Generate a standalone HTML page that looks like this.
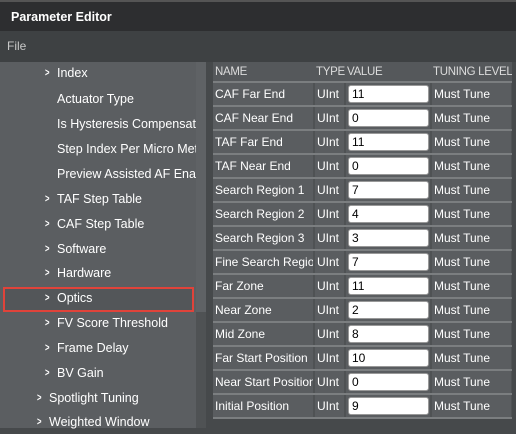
<!DOCTYPE html>
<html><head><style>
body{margin:0;width:516px;height:428px;overflow:hidden;background:#46494b;font-family:"Liberation Sans",sans-serif;font-size:12.5px;color:#fff;position:relative}
.title{position:absolute;left:0;top:0;width:516px;height:31px;background:#2d2e30;border-top:2px solid #555;box-sizing:border-box;font-weight:bold;font-size:12.5px;line-height:30px;padding-left:11px}
.menu{position:absolute;left:0;top:31px;width:516px;height:31px;background:#3e4143;color:#c8c8c8;line-height:30px;padding-left:7px;box-sizing:border-box;font-size:12px}
.left{position:absolute;left:0;top:62px;width:196px;height:366px;background:#5b5e61;overflow:hidden}
.sb{position:absolute;left:196px;top:62px;width:10px;height:366px;background:#4f5254}
.thumb{position:absolute;left:196px;top:62px;width:10px;height:250px;background:#5f6265}
.item{position:absolute;white-space:nowrap;height:24px;line-height:24px}
.ch{position:absolute;font-size:11px;font-weight:bold;transform:scaleX(.7)}
.hl{position:absolute;left:3px;top:287px;width:187px;height:21px;border:2px solid #e0433a;background:#535659}
table{position:absolute;left:213px;top:62px;border-collapse:collapse;width:299px;table-layout:fixed;font-size:12px}
td{height:24px;padding:0 2px;border-bottom:2px solid #7b7e80;border-right:2px solid #4f5254;background:#5a5d60;white-space:nowrap;overflow:hidden;box-sizing:border-box}
th{height:20px;box-sizing:border-box;text-align:left;font-weight:normal;font-size:11.5px;letter-spacing:-0.3px;color:#dcdcdc;padding:0 2px;background:#55585b;border-bottom:2px solid #7b7e80;white-space:nowrap;overflow:hidden}
.in{background:#fff;color:#000;border-radius:3px;height:16px;line-height:16px;padding-left:3px;width:76px;border:1px solid #999}
.rt{position:absolute;left:512px;top:62px;width:4px;height:366px;background:#46494b}
</style></head><body>
<div class="title">Parameter Editor</div>
<div class="menu">File</div>
<div class="left"></div>
<div class="sb"></div><div class="thumb"></div>
<div class="hl"></div>
<div style="position:absolute;left:0;top:0">
<div class="item" style="top:61px;left:57px"><span class="ch" style="left:-13px">&gt;</span>Index</div>
<div class="item" style="top:87px;left:57px">Actuator Type</div>
<div class="item" style="top:112px;left:57px;width:139px;overflow:hidden">Is Hysteresis Compensation</div>
<div class="item" style="top:137px;left:57px;width:139px;overflow:hidden">Step Index Per Micro Meter</div>
<div class="item" style="top:162px;left:57px;width:139px;overflow:hidden">Preview Assisted AF Enable</div>
<div class="item" style="top:187px;left:57px"><span class="ch" style="left:-13px">&gt;</span>TAF Step Table</div>
<div class="item" style="top:212px;left:57px"><span class="ch" style="left:-13px">&gt;</span>CAF Step Table</div>
<div class="item" style="top:237px;left:57px"><span class="ch" style="left:-13px">&gt;</span>Software</div>
<div class="item" style="top:261px;left:57px"><span class="ch" style="left:-13px">&gt;</span>Hardware</div>
<div class="item" style="top:286px;left:57px"><span class="ch" style="left:-13px">&gt;</span>Optics</div>
<div class="item" style="top:311px;left:57px"><span class="ch" style="left:-13px">&gt;</span>FV Score Threshold</div>
<div class="item" style="top:336px;left:57px"><span class="ch" style="left:-13px">&gt;</span>Frame Delay</div>
<div class="item" style="top:361px;left:57px"><span class="ch" style="left:-13px">&gt;</span>BV Gain</div>
<div class="item" style="top:386px;left:49px"><span class="ch" style="left:-13px">&gt;</span>Spotlight Tuning</div>
<div class="item" style="top:410px;left:49px"><span class="ch" style="left:-13px">&gt;</span>Weighted Window</div>
</div>
<table>
<colgroup><col style="width:101px"><col style="width:31px"><col style="width:86px"><col style="width:81px"></colgroup>
<tr><th>NAME</th><th>TYPE</th><th>VALUE</th><th>TUNING LEVEL</th></tr>
<tr><td>CAF Far End</td><td>UInt</td><td><div class="in">11</div></td><td>Must Tune</td></tr>
<tr><td>CAF Near End</td><td>UInt</td><td><div class="in">0</div></td><td>Must Tune</td></tr>
<tr><td>TAF Far End</td><td>UInt</td><td><div class="in">11</div></td><td>Must Tune</td></tr>
<tr><td>TAF Near End</td><td>UInt</td><td><div class="in">0</div></td><td>Must Tune</td></tr>
<tr><td>Search Region 1</td><td>UInt</td><td><div class="in">7</div></td><td>Must Tune</td></tr>
<tr><td>Search Region 2</td><td>UInt</td><td><div class="in">4</div></td><td>Must Tune</td></tr>
<tr><td>Search Region 3</td><td>UInt</td><td><div class="in">3</div></td><td>Must Tune</td></tr>
<tr><td>Fine Search Region</td><td>UInt</td><td><div class="in">7</div></td><td>Must Tune</td></tr>
<tr><td>Far Zone</td><td>UInt</td><td><div class="in">11</div></td><td>Must Tune</td></tr>
<tr><td>Near Zone</td><td>UInt</td><td><div class="in">2</div></td><td>Must Tune</td></tr>
<tr><td>Mid Zone</td><td>UInt</td><td><div class="in">8</div></td><td>Must Tune</td></tr>
<tr><td>Far Start Position</td><td>UInt</td><td><div class="in">10</div></td><td>Must Tune</td></tr>
<tr><td>Near Start Position</td><td>UInt</td><td><div class="in">0</div></td><td>Must Tune</td></tr>
<tr><td>Initial Position</td><td>UInt</td><td><div class="in">9</div></td><td>Must Tune</td></tr>
</table>
<div class="rt"></div>
</body></html>
